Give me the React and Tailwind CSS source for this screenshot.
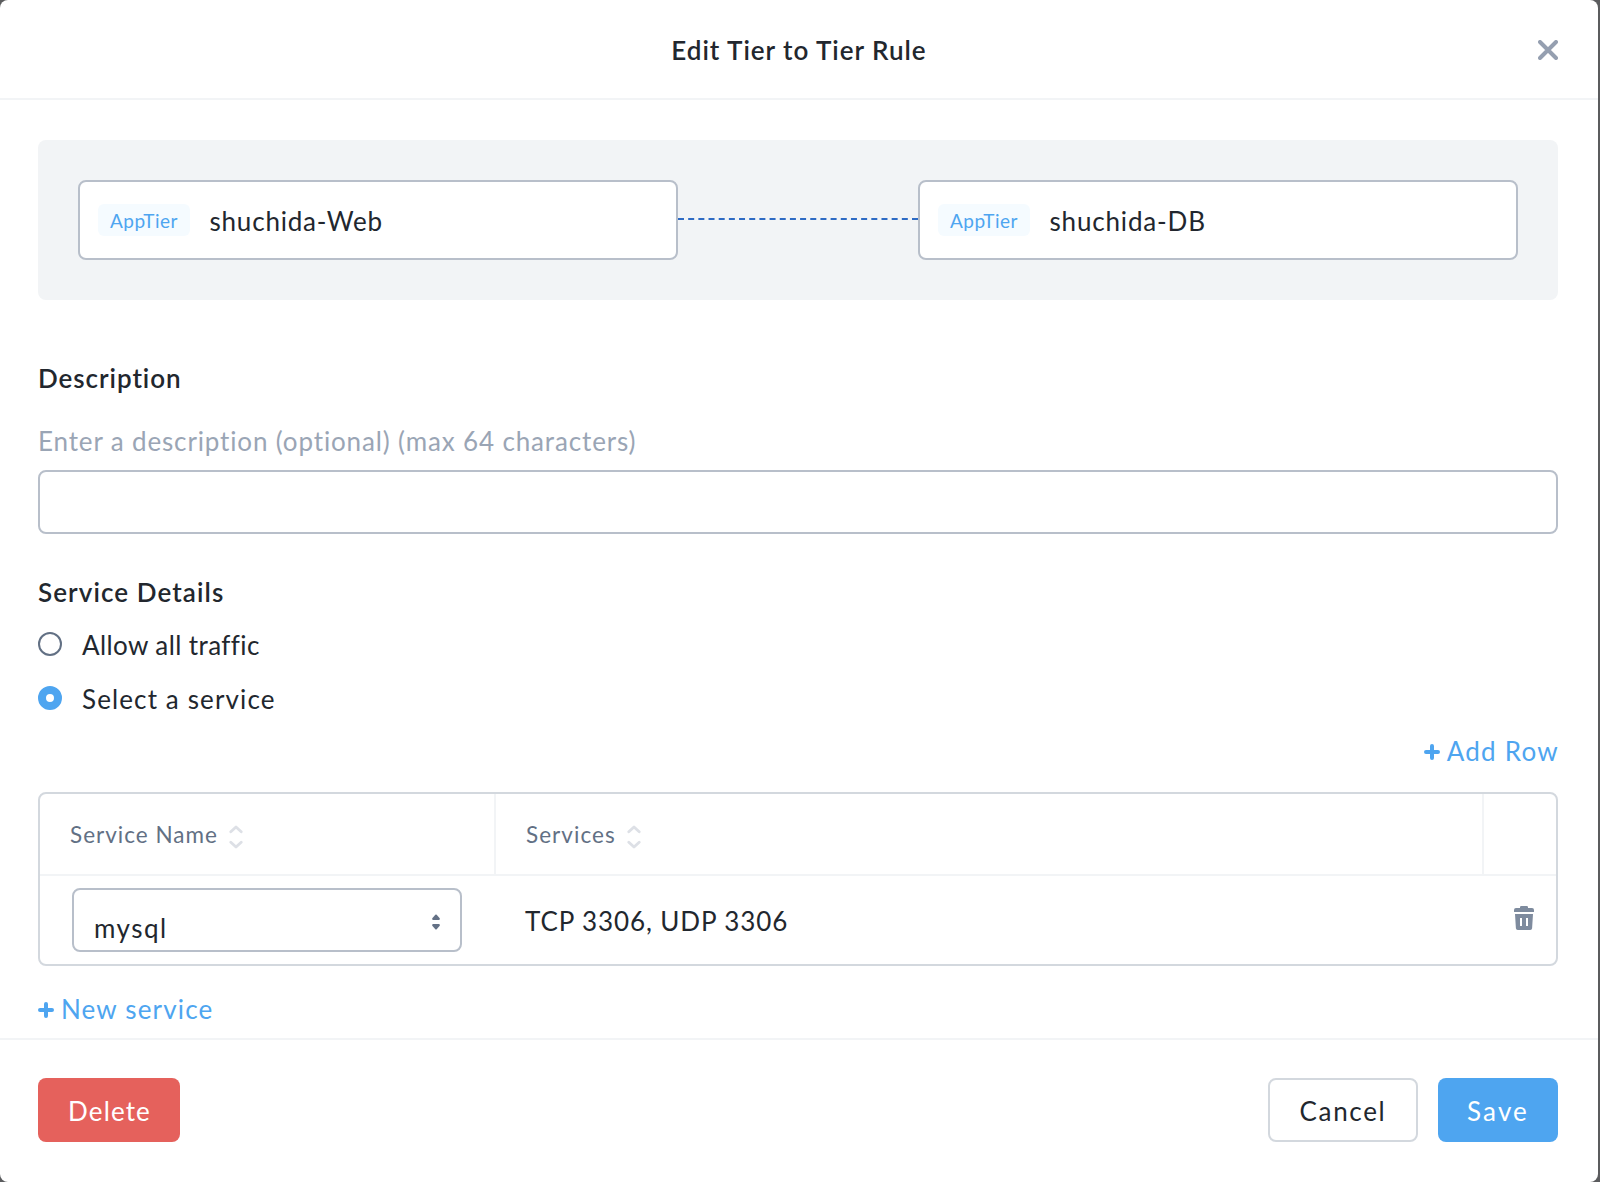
import React from "react";

function CloseIcon() {
  return (
    <svg width="20" height="20" viewBox="0 0 20 20" fill="none" stroke="#959fb0" strokeWidth="4" strokeLinecap="round">
      <path d="M2 2L18 18M18 2L2 18" />
    </svg>
  );
}

function PlusIcon() {
  return (
    <svg className="mt-0.5 shrink-0" width="16" height="16" viewBox="0 0 16 16" fill="none" stroke="#4ea5f0" strokeWidth="4" strokeLinecap="round">
      <path d="M8 2V14M2 8H14" />
    </svg>
  );
}

function SortIcon() {
  return (
    <svg className="mt-1.5 shrink-0" width="14" height="24" viewBox="0 0 14 24" fill="none" stroke="#dde0e6" strokeWidth="2.8" strokeLinecap="round" strokeLinejoin="round">
      <path d="M1.8 6.8L7 2L12.2 6.8M1.8 17.2L7 22L12.2 17.2" />
    </svg>
  );
}

function CaretIcon() {
  return (
    <svg className="shrink-0" width="8" height="16" viewBox="0 0 8 16" fill="#647186">
      <path d="M3.3 0.8Q4 0.1 4.7 0.8L7.7 4.2Q8.3 5.6 7 6H1Q-0.3 5.6 0.3 4.2Z" />
      <path d="M3.3 15.2Q4 15.9 4.7 15.2L7.7 11.8Q8.3 10.4 7 10H1Q-0.3 10.4 0.3 11.8Z" />
    </svg>
  );
}

function TrashIcon() {
  return (
    <svg className="-mt-1 shrink-0" width="20" height="24" viewBox="0 0 20 24" fill="#7e8b9e">
      <path d="M6 2V1.2Q6 0 7.2 0H12.8Q14 0 14 1.2V2H18Q20 2 20 4V6H0V4Q0 2 2 2Z" />
      <path fillRule="evenodd" d="M1 8H19L18.1 22.2Q18 24 16.2 24H3.8Q2 24 1.9 22.2ZM6 12V20H8V12ZM12 12V20H14V12Z" />
    </svg>
  );
}

function Tier({ children }) {
  return (
    <div className="flex h-20 w-[600px] items-center rounded-lg border-2 border-[#b8bfca] bg-white pl-[18px]">
      <span className="flex h-8 w-[92px] items-center rounded-md bg-[#f5fbff] pt-0.5 pl-3 text-[19px] leading-8 tracking-[0.5px] text-[#4ea5f0]">
        AppTier
      </span>
      {children}
    </div>
  );
}

export default function App() {
  return (
    <div className="h-[1182px] w-[1600px] overflow-hidden bg-[#5b5c5e] font-['Lato',sans-serif] text-[26px] leading-8 whitespace-nowrap text-[#22272e]">
      <div className="flex h-[1182px] w-[1598px] flex-col rounded-lg bg-white">
        <header className="grid h-[100px] grid-cols-[1fr_auto_1fr] items-center border-b-2 border-[#f2f4f6]">
          <span />
          <h1 className="pt-0.5 font-semibold tracking-[0.98px]">Edit Tier to Tier Rule</h1>
          <button className="mt-0.5 mr-10 justify-self-end" aria-label="Close">
            <CloseIcon />
          </button>
        </header>

        <main className="flex h-[938px] flex-col pt-10 pr-10 pl-[38px]">
          <section className="flex h-40 rounded-lg bg-[#f2f4f6] p-10">
            <Tier>
              <span className="ml-[19.5px] pt-0.5 tracking-[0.8px]">shuchida-Web</span>
            </Tier>
            <div className="mt-[38px] h-0 flex-1 border-t-2 border-dashed border-[#2e6bc4]" />
            <Tier>
              <span className="ml-[19.5px] pt-0.5 tracking-[0.83px]">shuchida-DB</span>
            </Tier>
          </section>

          <h2 className="mt-[62px] font-semibold tracking-[0.95px]">Description</h2>
          <label className="mt-[31px] tracking-[0.86px] text-[#9aa5b5]" htmlFor="description">
            Enter a description (optional) (max 64 characters)
          </label>
          <input id="description" className="mt-[13px] h-16 rounded-lg border-2 border-[#b8bfca] px-5" />

          <h2 className="mt-[42px] font-semibold tracking-[1.09px]">Service Details</h2>
          <label className="mt-5 flex h-8 items-center">
            <span className="size-6 rounded-full border-2 border-[#627084]" />
            <span className="ml-5 pt-0.5 tracking-[0.4px]">Allow all traffic</span>
          </label>
          <label className="mt-[22px] flex h-8 items-center">
            <span className="size-6 rounded-full border-8 border-[#4ea5f0] bg-white" />
            <span className="ml-5 pt-0.5 tracking-[1.12px]">Select a service</span>
          </label>

          <button className="mt-[21px] -mr-px flex items-center gap-[7px] self-end text-[#4ea5f0]">
            <PlusIcon />
            <span className="tracking-[1.25px]">Add Row</span>
          </button>

          <div className="mt-[25px] h-[174px] rounded-lg border-2 border-[#d3d8de]">
            <div className="grid h-[82px] grid-cols-[456px_988px_72px] border-b-2 border-[#f2f4f6] text-[22.5px] leading-7 text-[#627084]">
              <div className="flex items-center gap-[11px] border-r-2 border-[#f2f4f6] pl-[30px]">
                <span className="w-[148px] pt-0.5 tracking-[1px]">Service Name</span>
                <SortIcon />
              </div>
              <div className="flex items-center gap-[11px] border-r-2 border-[#f2f4f6] pl-[30px]">
                <span className="w-[90px] pt-0.5 tracking-[1.05px]">Services</span>
                <SortIcon />
              </div>
              <div />
            </div>
            <div className="grid h-[88px] grid-cols-[456px_988px_72px]">
              <div className="flex items-center pl-8">
                <div className="flex h-16 w-[390px] justify-between rounded-lg border-2 border-[#b8bfca] px-5">
                  <span className="pt-[22px] tracking-[1.49px]">mysql</span>
                  <span className="flex pt-6">
                    <CaretIcon />
                  </span>
                </div>
              </div>
              <div className="flex items-center pt-0.5 pl-[29px] tracking-[0.9px]">TCP 3306, UDP 3306</div>
              <div className="flex items-center justify-end pr-[22px]">
                <TrashIcon />
              </div>
            </div>
          </div>

          <button className="mt-[27px] flex items-center gap-[7px] self-start text-[#4ea5f0]">
            <PlusIcon />
            <span className="tracking-[1.16px]">New service</span>
          </button>
        </main>

        <footer className="flex h-36 justify-between border-t-2 border-[#f2f4f6] pt-[38px] pr-10 pl-[38px]">
          <button className="h-16 w-[142px] rounded-lg bg-[#e5615c] pt-0.5 pl-px tracking-[1.13px] text-white">Delete</button>
          <div className="flex gap-5">
            <button className="h-16 w-[150px] rounded-lg border-2 border-[#d3d8de] pt-0.5 tracking-[1.66px]">Cancel</button>
            <button className="h-16 w-[120px] rounded-lg bg-[#4ea5f0] pt-0.5 tracking-[2.13px] text-white">Save</button>
          </div>
        </footer>
      </div>
    </div>
  );
}
